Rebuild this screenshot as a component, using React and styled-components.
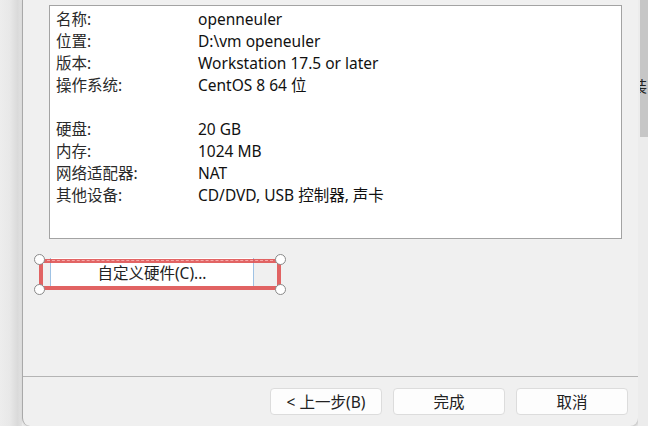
import styled, { createGlobalStyle } from 'styled-components';

const GlobalStyle = createGlobalStyle`
  html, body {
    margin: 0;
    padding: 0;
    width: 648px;
    height: 426px;
    overflow: hidden;
    background: #ececec;
    font-family: "Noto Sans", "Noto Sans CJK SC", sans-serif;
    color: #1e1e1e;
  }
`;

const Page = styled.div`
  display: flex;
  width: 648px;
  height: 426px;
`;

const Backdrop = styled.div`
  width: 22px;
  flex-shrink: 0;
  background: linear-gradient(to right, #ededed 0%, #e8e8e8 45%, #dadada 80%, #e2e2e2 100%);
`;

const Dialog = styled.div`
  flex: 1;
  display: flex;
  flex-direction: column;
  background: #f0f0f0;
  border-left: 1px solid #a9a9a9;
  border-bottom-left-radius: 8px;
  border-bottom-right-radius: 8px;
  box-shadow: 1px 1px 3px rgba(0, 0, 0, 0.18);
  overflow: hidden;
`;

const Body = styled.div`
  flex: 1;
  padding: 5px 15px 0 26px;
`;

const Summary = styled.div`
  width: 571px;
  height: 230px;
  box-sizing: content-box;
  background: #fff;
  border: 1px solid #a3a3a3;
  padding-top: 2px;
`;

const Row = styled.div`
  display: grid;
  grid-template-columns: 142px 1fr;
  height: 22px;
  align-items: center;
  padding-left: 6px;
  font-size: 15.5px;
  line-height: 22px;
`;

const Label = styled.span`
  color: #2a2a2a;
`;

const Value = styled.span`
  color: #111;
`;

const HardwareArea = styled.div`
  position: relative;
  width: 204px;
  margin: 19px 0 0 1px;
`;

const CustomButton = styled.button`
  display: block;
  width: 204px;
  height: 28px;
  background: #fff;
  border: none;
  border-left: 1px solid #9fc2e4;
  border-right: 1px solid #9fc2e4;
  font-family: inherit;
  font-size: 15.5px;
  color: #222;
  padding: 0;
`;

const Selection = styled.div`
  position: absolute;
  left: -11px;
  top: 1px;
  width: 234px;
  height: 23px;
  border: 4px solid rgba(222, 78, 78, 0.88);
  pointer-events: none;

  &::before {
    content: "";
    position: absolute;
    left: 4px;
    right: 4px;
    top: -3px;
    border-top: 1px dashed rgba(255, 200, 200, 0.7);
  }
`;

const Handle = styled.span`
  position: absolute;
  width: 9px;
  height: 9px;
  border-radius: 50%;
  background: #fff;
  border: 1.5px solid #8a8a8a;
  ${(p) => (p.$right ? 'right: -9px;' : 'left: -9px;')}
  ${(p) => (p.$bottom ? 'bottom: -9px;' : 'top: -9px;')}
`;

const Footer = styled.div`
  display: flex;
  justify-content: flex-end;
  gap: 11px;
  padding: 11px 10px 11px 0;
  border-top: 1px solid #b4b4b4;
`;

const FooterButton = styled.button`
  width: 112px;
  height: 27px;
  background: #fdfdfd;
  border: 1px solid #dcdcdc;
  border-radius: 4px;
  font-family: inherit;
  font-size: 15.5px;
  color: #222;
  padding: 0;
`;

const SideStrip = styled.div`
  width: 10px;
  flex-shrink: 0;
  display: flex;
  flex-direction: column;
  background: #ececec;
`;

const SideDark = styled.div`
  height: 137px;
  margin-left: 2px;
  background: #c6c6c6;
  overflow: hidden;
  font-size: 15px;
  color: #222;
  padding-top: 75px;
  box-sizing: border-box;
  white-space: nowrap;

  span {
    margin-left: -8px;
  }
`;

const rows = [
  ['名称:', 'openneuler'],
  ['位置:', 'D:\\vm openeuler'],
  ['版本:', 'Workstation 17.5 or later'],
  ['操作系统:', 'CentOS 8 64 位'],
  ['', ''],
  ['硬盘:', '20 GB'],
  ['内存:', '1024 MB'],
  ['网络适配器:', 'NAT'],
  ['其他设备:', 'CD/DVD, USB 控制器, 声卡'],
];

export default function App() {
  return (
    <Page>
      <GlobalStyle />
      <Backdrop />
      <Dialog>
        <Body>
          <Summary>
            {rows.map(([label, value], i) => (
              <Row key={i}>
                <Label>{label}</Label>
                <Value>{value}</Value>
              </Row>
            ))}
          </Summary>
          <HardwareArea>
            <CustomButton>自定义硬件(C)...</CustomButton>
            <Selection>
              <Handle />
              <Handle $right />
              <Handle $bottom />
              <Handle $right $bottom />
            </Selection>
          </HardwareArea>
        </Body>
        <Footer>
          <FooterButton>&lt; 上一步(B)</FooterButton>
          <FooterButton>完成</FooterButton>
          <FooterButton>取消</FooterButton>
        </Footer>
      </Dialog>
      <SideStrip>
        <SideDark>
          <span>装</span>
        </SideDark>
      </SideStrip>
    </Page>
  );
}
